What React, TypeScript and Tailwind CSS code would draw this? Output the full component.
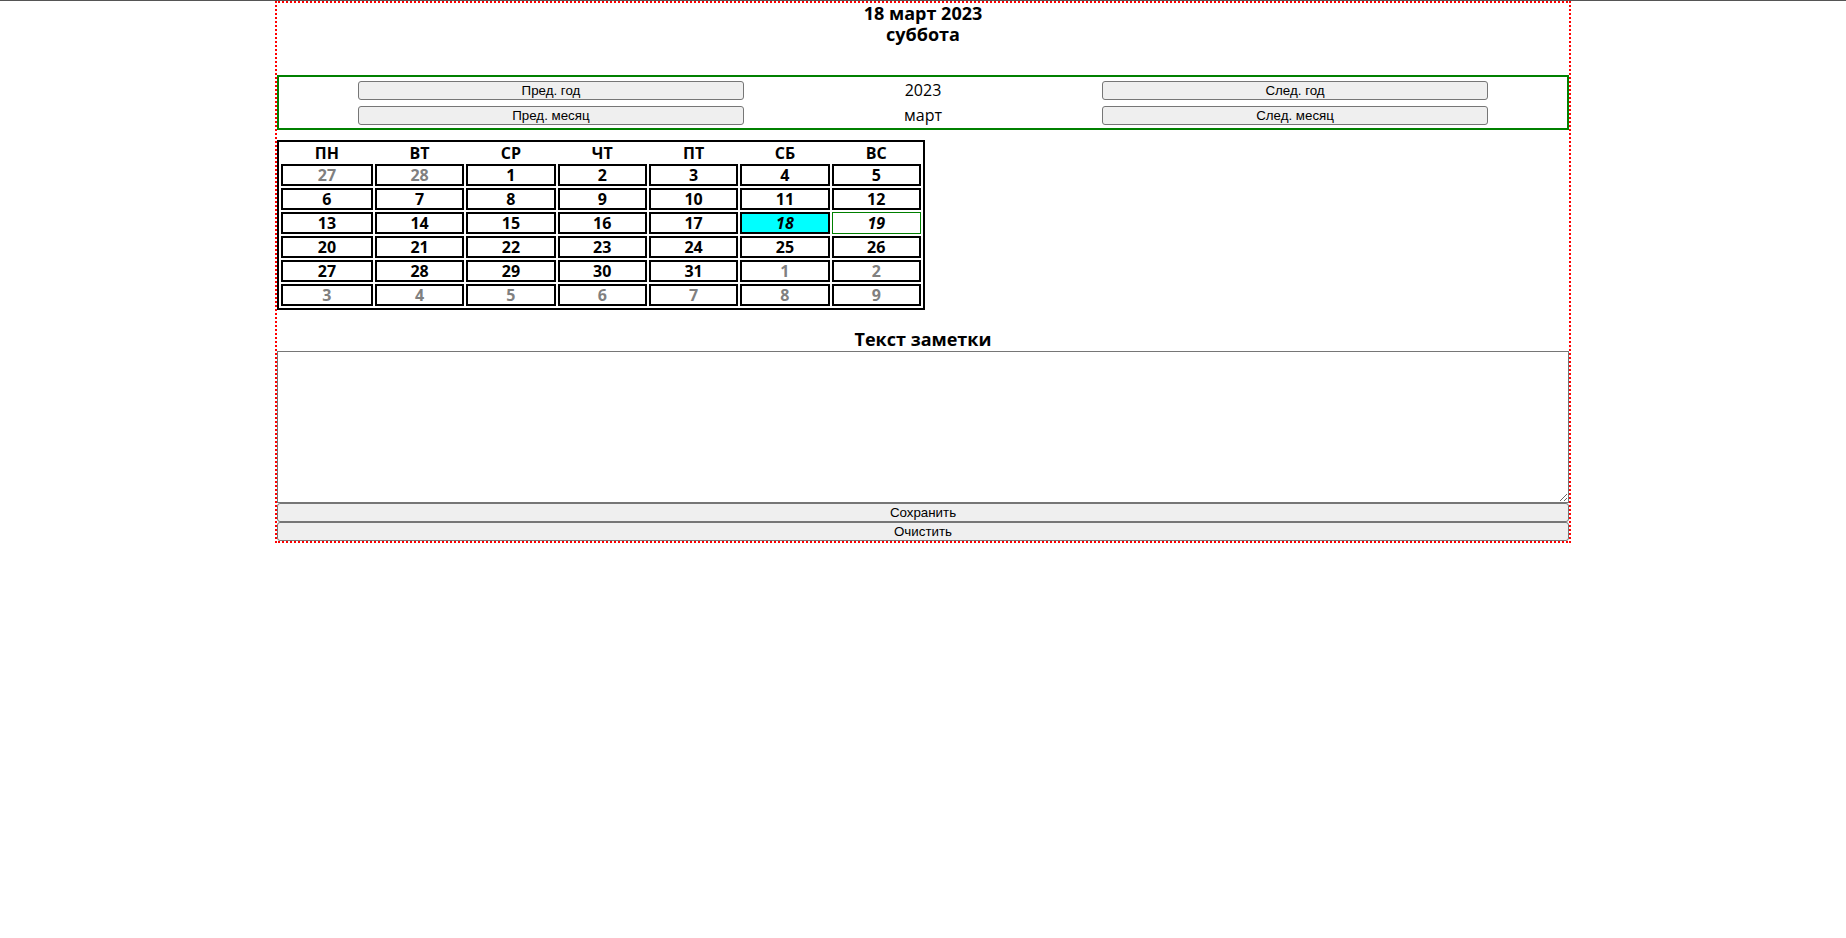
import React from "react";

type Day = { d: number; other?: boolean };

const weeks: Day[][] = [
  [{ d: 27, other: true }, { d: 28, other: true }, { d: 1 }, { d: 2 }, { d: 3 }, { d: 4 }, { d: 5 }],
  [{ d: 6 }, { d: 7 }, { d: 8 }, { d: 9 }, { d: 10 }, { d: 11 }, { d: 12 }],
  [{ d: 13 }, { d: 14 }, { d: 15 }, { d: 16 }, { d: 17 }, { d: 18 }, { d: 19 }],
  [{ d: 20 }, { d: 21 }, { d: 22 }, { d: 23 }, { d: 24 }, { d: 25 }, { d: 26 }],
  [{ d: 27 }, { d: 28 }, { d: 29 }, { d: 30 }, { d: 31 }, { d: 1, other: true }, { d: 2, other: true }],
  [
    { d: 3, other: true },
    { d: 4, other: true },
    { d: 5, other: true },
    { d: 6, other: true },
    { d: 7, other: true },
    { d: 8, other: true },
    { d: 9, other: true },
  ],
];

const head = ["ПН", "ВТ", "СР", "ЧТ", "ПТ", "СБ", "ВС"];

const btn =
  "h-[19px] bg-[#efefef] border border-[#767676] rounded-[3px] text-[13.33px] leading-none text-black font-['Liberation_Sans',Arial,sans-serif] flex items-center justify-center";

export default function App() {
  return (
    <div className="min-h-screen bg-white font-['Open_Sans',sans-serif] text-black">
      <div className="h-px w-full bg-[#555555]" />
      <div className="mx-auto w-[calc(70%+4px)] border-2 border-dotted border-[#ff0000]">
        <div className="text-center font-bold text-[18px] leading-[21px]">
          <div>18 март 2023</div>
          <div>суббота</div>
        </div>

        <div className="mt-[30px] border-2 border-[#008000] grid grid-cols-[1fr_200px_1fr] items-center gap-y-[6px] pt-[4px] pb-[3px]">
          <button className={btn + " w-[386px] justify-self-center"}>Пред. год</button>
          <div className="text-center text-[16px] leading-[19px]">2023</div>
          <button className={btn + " w-[386px] justify-self-center"}>След. год</button>
          <button className={btn + " w-[386px] justify-self-center"}>Пред. месяц</button>
          <div className="text-center text-[16px] leading-[19px]">март</div>
          <button className={btn + " w-[386px] justify-self-center"}>След. месяц</button>
        </div>

        <div className="mt-[10px] w-[648px] border-2 border-black p-[2px] grid grid-cols-[92px_repeat(6,1fr)] gap-[2px] text-[16px] font-bold">
          {head.map((h) => (
            <div key={h} className="h-[18px] leading-[18px] text-center">
              {h}
            </div>
          ))}
          {weeks.flat().map((day, i) => {
            const isToday = !day.other && day.d === 18;
            const isSel = !day.other && day.d === 19;
            let cls = "h-[22px] flex items-center justify-center leading-[18px] ";
            if (isToday) cls += "border-2 border-black bg-[#00ffff] italic";
            else if (isSel) cls += "border border-[#008000] italic";
            else cls += "border-2 border-black";
            if (day.other) cls += " text-[#808080]";
            return (
              <div key={i} className={cls}>
                {day.d}
              </div>
            );
          })}
        </div>

        <div className="mt-[19px] text-center font-bold text-[18px] leading-[21px]">Текст заметки</div>
        <textarea className="mt-[1px] block w-full h-[152px] border border-[#767676] resize bg-white" />
        <button className={btn + " w-full h-[19px] rounded-[2px]"}>Сохранить</button>
        <button className={btn + " w-full h-[19px] rounded-[2px]"}>Очистить</button>
      </div>
    </div>
  );
}
